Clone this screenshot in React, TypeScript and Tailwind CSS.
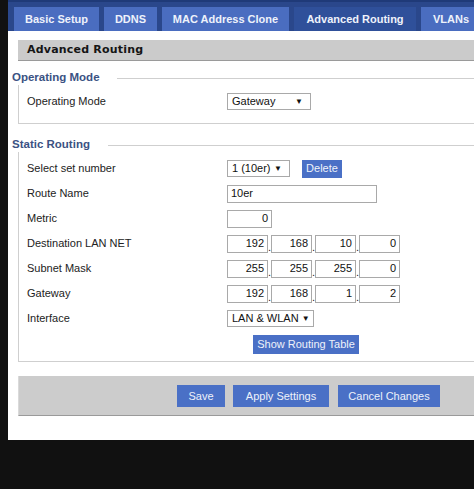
import React from "react";

const tabs = [
  { t: "Basic Setup", w: "w-[85px]", a: false },
  { t: "DDNS", w: "w-[53px]", a: false },
  { t: "MAC Address Clone", w: "w-[127px]", a: false },
  { t: "Advanced Routing", w: "w-[122px]", a: true },
  { t: "VLANs", w: "w-[60px]", a: false },
];

function Label({ children }: { children: React.ReactNode }) {
  return (
    <div className="w-[200px] shrink-0 text-[11px] text-[#222] leading-none">{children}</div>
  );
}

function Row({ label, children }: { label: string; children: React.ReactNode }) {
  return (
    <div className="flex items-center h-[25px]">
      <Label>{label}</Label>
      <div className="flex items-center">{children}</div>
    </div>
  );
}

function Select({ value, w }: { value: string; w: string }) {
  return (
    <div
      className={`${w} h-[17px] border border-[#a9a9a9] bg-white flex items-center justify-between whitespace-nowrap pl-[4px] pr-[7px] text-[11px] text-[#111]`}
    >
      <span className="whitespace-nowrap">{value}</span>
      <span className="text-[8px] leading-none shrink-0 ml-[3px]">▼</span>
    </div>
  );
}

function Box({ value, w, right }: { value: string; w: string; right?: boolean }) {
  return (
    <div
      className={`${w} h-[18px] border border-[#a9a9a9] bg-white flex items-center ${
        right ? "justify-end pr-[3px]" : "pl-[3px]"
      } text-[11px] text-[#111]`}
    >
      {value}
    </div>
  );
}

function Ip({ parts }: { parts: string[] }) {
  return (
    <div className="flex items-end">
      {parts.map((p, i) => (
        <React.Fragment key={i}>
          <Box value={p} w="w-[41px]" right />
          {i < 3 && <span className="w-[3px] text-[11px] leading-[12px] text-[#222]">.</span>}
        </React.Fragment>
      ))}
    </div>
  );
}

function Btn({ children, w, h }: { children: React.ReactNode; w: string; h: string }) {
  return (
    <div
      className={`${w} ${h} bg-[#4a70c6] text-[#eef2fa] text-[11px] flex items-center justify-center whitespace-nowrap`}
    >
      {children}
    </div>
  );
}

function Legend({ text, lineMl }: { text: string; lineMl: string }) {
  return (
    <div className="flex items-center h-[14px] ml-[4px]">
      <span className="text-[11.5px] font-bold text-[#3b5283] leading-none whitespace-nowrap">
        {text}
      </span>
      <div className={`flex-1 h-px bg-[#cfcfcf] ${lineMl}`} />
    </div>
  );
}

export default function App() {
  return (
    <div className="w-[474px] h-[489px] bg-[#111111] flex overflow-hidden font-['Liberation_Sans',Arial,sans-serif]">
      <div className="w-[8px] shrink-0" />
      <div className="w-[466px] h-[440px] bg-white flex flex-col overflow-hidden">
        {/* tab bar */}
        <div className="h-[31px] shrink-0 bg-[#2a478b] flex items-end gap-[5px] pl-[6px] border-t-[2px] border-[#1f3a78]">
          {tabs.map((t) => (
            <div
              key={t.t}
              className={`${t.w} shrink-0 h-[24px] flex items-center justify-center text-[11px] font-bold text-[#eef2fb] ${
                t.a ? "bg-[#2f509a]" : "bg-[#4a6dc0]"
              }`}
            >
              {t.t}
            </div>
          ))}
        </div>

        {/* header */}
        <div className="mt-[9px] ml-[10px] h-[21px] shrink-0 bg-[#cbcbcb] border-b border-[#9a9a9a] flex items-center pl-[9px]">
          <span className="font-['DejaVu_Sans',Verdana,sans-serif] font-bold text-[11px] text-[#151515] tracking-[0.2px]">
            Advanced Routing
          </span>
        </div>

        {/* Operating mode */}
        <div className="mt-[10px]">
          <Legend text="Operating Mode" lineMl="ml-[17px]" />
        </div>
        <div className="ml-[10px] border-l border-b border-[#cfcfcf] pl-[8px] pt-[4px] pb-[9px]">
          <Row label="Operating Mode">
            <Select value="Gateway" w="w-[84px]" />
          </Row>
        </div>

        {/* Static routing */}
        <div className="mt-[14px]">
          <Legend text="Static Routing" lineMl="ml-[18px]" />
        </div>
        <div className="ml-[10px] border-l border-b border-[#cfcfcf] pl-[8px] pt-[4px] pb-[7px]">
          <Row label="Select set number">
            <Select value="1 (10er)" w="w-[63px]" />
            <div className="ml-[12px]">
              <Btn w="w-[40px]" h="h-[18px]">Delete</Btn>
            </div>
          </Row>
          <Row label="Route Name">
            <Box value="10er" w="w-[150px]" />
          </Row>
          <Row label="Metric">
            <Box value="0" w="w-[45px]" right />
          </Row>
          <Row label="Destination LAN NET">
            <Ip parts={["192", "168", "10", "0"]} />
          </Row>
          <Row label="Subnet Mask">
            <Ip parts={["255", "255", "255", "0"]} />
          </Row>
          <Row label="Gateway">
            <Ip parts={["192", "168", "1", "2"]} />
          </Row>
          <Row label="Interface">
            <Select value="LAN & WLAN" w="w-[87px]" />
          </Row>
          <div className="mt-[4px] pl-[226px]">
            <Btn w="w-[106px]" h="h-[19px]">Show Routing Table</Btn>
          </div>
        </div>

        {/* button bar */}
        <div className="mt-[14px] ml-[10px] h-[40px] shrink-0 bg-[#cccccc] border-l border-[#dadada] border-b border-b-[#9a9a9a] flex items-start pt-[9px] pl-[158px] gap-[8px]">
          <Btn w="w-[48px]" h="h-[22px]">Save</Btn>
          <Btn w="w-[96px]" h="h-[22px]">Apply Settings</Btn>
          <div className="ml-[1px]">
            <Btn w="w-[102px]" h="h-[22px]">Cancel Changes</Btn>
          </div>
        </div>
      </div>
    </div>
  );
}
